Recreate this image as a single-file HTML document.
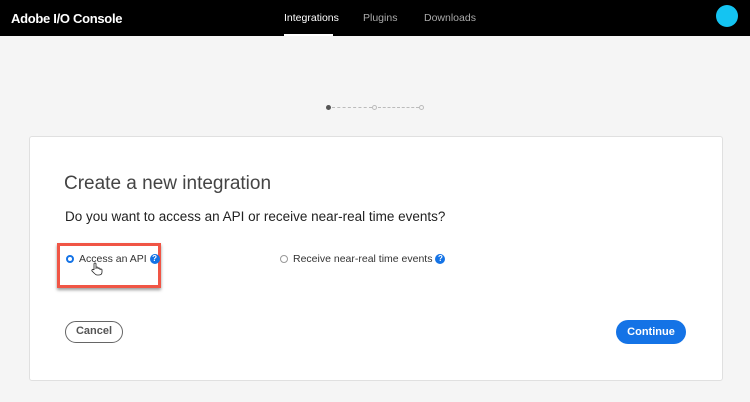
<!DOCTYPE html>
<html><head><style>
*{margin:0;padding:0;box-sizing:border-box}
body{width:750px;height:402px;background:#f5f5f5;font-family:"Liberation Sans",sans-serif;position:relative;overflow:hidden}
.hdr{position:absolute;left:0;top:0;width:750px;height:36px;background:#000;color:#fff}
.abs{position:absolute}
.card{position:absolute;left:29px;top:136px;width:694px;height:245px;background:#fff;border:1px solid #e0e0e0;border-radius:3px}
.q{display:inline-block;width:10px;height:10px;border-radius:50%;background:#1473e6;color:#fff;font-size:8px;font-weight:bold;text-align:center;line-height:10px;vertical-align:1px}
</style></head><body>
<div class="hdr">
<div class="abs" style="left:11px;top:11px;font-size:13px;font-weight:bold;letter-spacing:-0.3px">Adobe I/O Console</div>
<div class="abs" style="left:284px;top:12px;font-size:10.5px">Integrations</div>
<div class="abs" style="left:284px;top:34px;width:49px;height:2px;background:#fff"></div>
<div class="abs" style="left:363px;top:12px;font-size:10.5px;color:#aaa">Plugins</div>
<div class="abs" style="left:424px;top:12px;font-size:10.5px;color:#aaa">Downloads</div>
<div class="abs" style="left:716px;top:5px;width:22px;height:22px;border-radius:50%;background:#14c4f2"></div>
</div>
<div class="abs" style="left:326px;top:105px;width:5px;height:5px;border-radius:50%;background:#555"></div>
<div class="abs" style="left:332px;top:107px;width:40px;border-top:1px dashed #bbb"></div>
<div class="abs" style="left:372px;top:105px;width:5px;height:5px;border-radius:50%;border:1px solid #bbb"></div>
<div class="abs" style="left:378px;top:107px;width:41px;border-top:1px dashed #bbb"></div>
<div class="abs" style="left:419px;top:105px;width:5px;height:5px;border-radius:50%;border:1px solid #bbb"></div>
<div class="card"></div>
<div class="abs" style="left:64px;top:173px;font-size:19px;color:#444">Create a new integration</div>
<div class="abs" style="left:65px;top:209px;font-size:13.5px;color:#222">Do you want to access an API or receive near-real time events?</div>
<div class="abs" style="left:57px;top:243px;width:104px;height:45px;border:3px solid #f05545;box-shadow:0 2px 3px rgba(0,0,0,.4)"></div>
<div class="abs" style="left:66px;top:255px;width:8px;height:8px;border-radius:50%;border:2.5px solid #1473e6"></div>
<div class="abs" style="left:79px;top:253px;font-size:10.5px;color:#333">Access an API <span class="q">?</span></div>
<svg class="abs" style="left:91px;top:262px" width="12" height="14" viewBox="0 0 12 14"><path d="M3 8V2a1 1 0 0 1 2 0v5V6a1 1 0 0 1 2 0v1a1 1 0 0 1 2 0v1a1 1 0 0 1 2 0v2c0 2-1 3-3 3H6c-1 0-2-1-3-2L1 9a1 1 0 0 1 2-1z" fill="#fff" stroke="#222" stroke-width="0.8"/></svg>
<div class="abs" style="left:280px;top:255px;width:8px;height:8px;border-radius:50%;border:1px solid #999"></div>
<div class="abs" style="left:293px;top:253px;font-size:10.5px;color:#333">Receive near-real time events <span class="q">?</span></div>
<div class="abs" style="left:65px;top:321px;width:58px;height:22px;border:1.5px solid #666;border-radius:11px;font-size:11px;color:#555;text-align:center;line-height:19px;font-weight:bold">Cancel</div>
<div class="abs" style="left:616px;top:320px;width:70px;height:24px;background:#1473e6;border-radius:12px;font-size:11px;color:#fff;text-align:center;line-height:24px;font-weight:bold">Continue</div>
</body></html>
